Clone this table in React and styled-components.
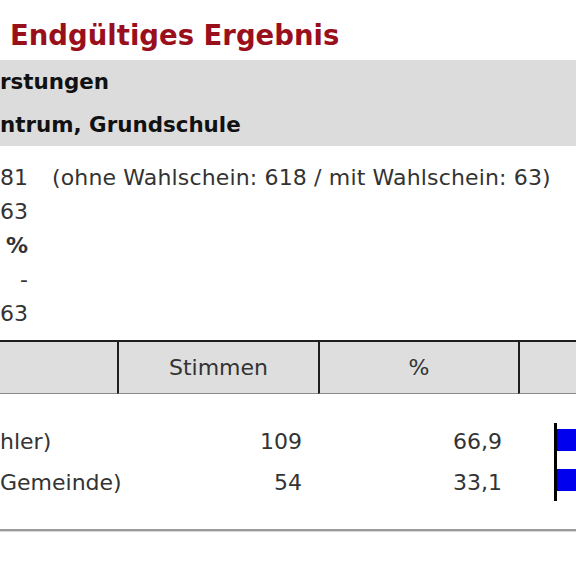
import React from "react";
import styled, { createGlobalStyle } from "styled-components";

const GlobalStyle = createGlobalStyle`
  html, body {
    margin: 0;
    padding: 0;
    background: #ffffff;
  }
  body {
    width: 576px;
    height: 576px;
    overflow: hidden;
    font-family: "DejaVu Sans", Verdana, sans-serif;
    color: #333333;
  }
`;

const Page = styled.div`
  width: 576px;
  padding-top: 13px;
`;

const Title = styled.h1`
  margin: 0 0 2px 10px;
  font-size: 27.5px;
  line-height: 45px;
  font-weight: bold;
  color: #990f1b;
`;

const Band = styled.div`
  background: #dcdcdc;
  display: flex;
  flex-direction: column;
`;

const BandLine = styled.div`
  height: 43px;
  display: flex;
  align-items: center;
  font-size: 21.4px;
  font-weight: bold;
  color: #111111;
`;

const Stats = styled.div`
  display: grid;
  grid-template-columns: 28px auto;
  column-gap: 24px;
  padding: 14px 0 10px;
`;

const StatValue = styled.div`
  height: 34px;
  display: flex;
  align-items: center;
  justify-content: flex-end;
  font-size: 22px;
  font-weight: ${(p) => (p.$bold ? "bold" : "normal")};
  white-space: nowrap;
`;

const StatNote = styled.div`
  height: 34px;
  display: flex;
  align-items: center;
  font-size: 22px;
  letter-spacing: 0.15px;
  white-space: nowrap;
`;

const Table = styled.div`
  display: grid;
  grid-template-columns: 117px 201px 200px 1fr;
`;

const HeadCell = styled.div`
  height: 51px;
  background: #dedede;
  border-top: 2px solid #1e1e1e;
  border-bottom: 1px solid #8a8a8a;
  border-left: ${(p) => (p.$first ? "none" : "2px solid #1e1e1e")};
  display: flex;
  align-items: center;
  justify-content: center;
  font-size: 22px;
  color: #333333;
`;

const Body = styled.div`
  grid-column: 1 / -1;
  display: grid;
  grid-template-columns: 117px 201px 200px 1fr;
  padding-top: 27px;
`;

const Cell = styled.div`
  height: 41px;
  display: flex;
  align-items: center;
  justify-content: ${(p) => (p.$right ? "flex-end" : "flex-start")};
  padding-right: ${(p) => (p.$right ? "16px" : "0")};
  font-size: 22px;
  white-space: nowrap;
`;

const BarCell = styled.div`
  grid-column: 4;
  grid-row: 1 / span 2;
  display: flex;
  flex-direction: column;
  gap: 18px;
  padding: 8px 0 9px 36px;
  position: relative;
`;

const Axis = styled.div`
  position: absolute;
  left: 36px;
  top: 2px;
  bottom: 2px;
  width: 3px;
  background: #000000;
`;

const Bar = styled.div`
  height: 22px;
  margin-left: 3px;
  background: #0000ee;
`;

const Rule = styled.div`
  margin-top: 26px;
  height: 2px;
  background: #9a9a9a;
  border-bottom: 1px solid #d8d8d8;
`;

const stats = [
  { value: "81", note: "(ohne Wahlschein: 618 / mit Wahlschein: 63)" },
  { value: "63" },
  { value: "%", bold: true },
  { value: "-" },
  { value: "63" },
];

const rows = [
  { name: "hler)", votes: "109", pct: "66,9" },
  { name: "Gemeinde)", votes: "54", pct: "33,1" },
];

export default function App() {
  return (
    <Page>
      <GlobalStyle />
      <Title>Endgültiges Ergebnis</Title>
      <Band>
        <BandLine>rstungen</BandLine>
        <BandLine>ntrum, Grundschule</BandLine>
      </Band>
      <Stats>
        {stats.map((s, i) => (
          <React.Fragment key={i}>
            <StatValue $bold={s.bold}>{s.value}</StatValue>
            <StatNote>{s.note}</StatNote>
          </React.Fragment>
        ))}
      </Stats>
      <Table>
        <HeadCell $first />
        <HeadCell>Stimmen</HeadCell>
        <HeadCell>%</HeadCell>
        <HeadCell />
        <Body>
          {rows.map((r, i) => (
            <React.Fragment key={i}>
              <Cell style={{ gridRow: i + 1 }}>{r.name}</Cell>
              <Cell $right style={{ gridRow: i + 1 }}>{r.votes}</Cell>
              <Cell $right style={{ gridRow: i + 1 }}>{r.pct}</Cell>
            </React.Fragment>
          ))}
          <BarCell>
            <Axis />
            <Bar />
            <Bar />
          </BarCell>
        </Body>
      </Table>
      <Rule />
    </Page>
  );
}
